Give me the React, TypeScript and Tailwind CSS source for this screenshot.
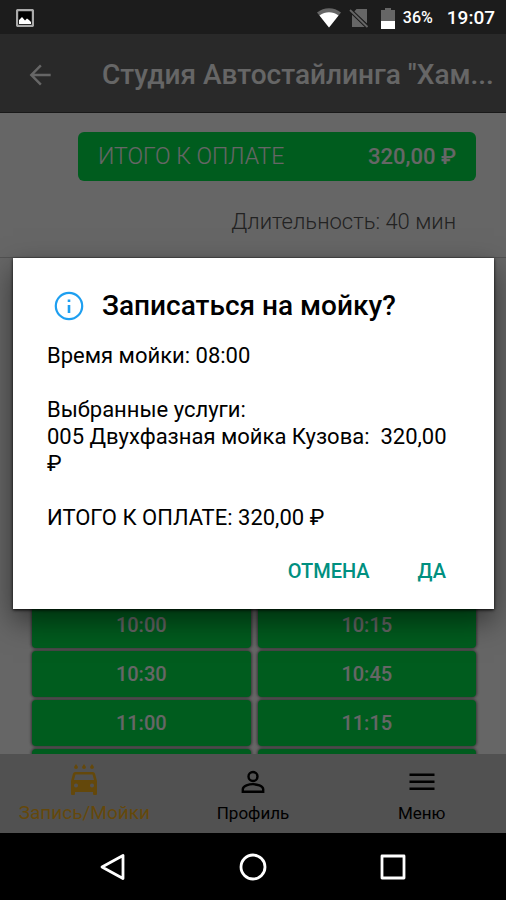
import React from "react";

const slots = ["10:00", "10:15", "10:30", "10:45", "11:00", "11:15"];
const nextSlots = ["11:30", "11:45"];

const slotClass =
  "h-[46px] rounded-[4px] bg-[#00e64d] text-[20px] leading-6 font-medium text-white shadow-[0_0_3px_1px_#888]";

function StatusBar() {
  return (
    <div className="flex h-[34px] shrink-0 items-center bg-[#1c1c1c] pt-0.5 pr-[11px] pl-4 text-white">
      <svg className="h-[18px] w-[18px]" viewBox="0 0 18 18" aria-hidden="true">
        <rect x="1" y="1" width="16" height="16" rx="1.5" fill="#000" stroke="#aaa" strokeWidth="2.4" />
        <path d="M3 15V11l3-3 3 3.5 2-2 2 1.500 2 2V15z" fill="#fff" />
      </svg>
      <div className="ml-auto flex items-center">
        <svg className="mr-2 h-5 w-6" viewBox="0 0 24 20" aria-hidden="true">
          <path d="M0 4.500C7-1.300 17-1.300 24 4.500L12 19.500z" fill="#666" />
          <path d="M2.500 7.500C8.500 3.200 15.500 3.200 21.500 7.500L12 19.500z" fill="#fff" />
        </svg>
        <svg className="mr-3 h-5 w-5" viewBox="0 0 20 20" aria-hidden="true">
          <path d="M7.500 1H18v14.500L4.800 4z" fill="#666" />
          <path d="M3 6.500L16.500 19H3z" fill="#666" />
          <path d="M1 2l17.500 17" stroke="#1c1c1c" strokeWidth="4" />
          <path d="M1 2l17.500 17" stroke="#666" strokeWidth="1.800" />
        </svg>
        <svg className="mr-2 h-[21px] w-[14px]" viewBox="0 0 14 21" aria-hidden="true">
          <path d="M4 0h6v2h4v12H0V2h4z" fill="#666" />
          <path d="M0 13h14v8H0z" fill="#fff" />
        </svg>
        <span className="mr-[14px] text-[16px] leading-5 font-medium">36%</span>
        <span className="text-[19px] leading-6 font-medium">19:07</span>
      </div>
    </div>
  );
}

function Header() {
  return (
    <header className="flex h-[79px] shrink-0 items-center border-b border-[#404040] bg-[#666] pt-1 pr-2 pl-6 text-white">
      <button type="button" aria-label="Назад" className="mr-[46px] shrink-0">
        <svg className="h-8 w-8" viewBox="0 0 24 24" fill="currentColor" aria-hidden="true">
          <path d="M20 11.100H7.700l5.600-5.600L12 4.200 4.200 12l7.800 7.800 1.300-1.300-5.600-5.600H20z" />
        </svg>
      </button>
      <h1 className="min-w-0 flex-1 truncate text-[28px] leading-8 font-medium">
        Студия Автостайлинга "Хам...
      </h1>
    </header>
  );
}

function Booking() {
  return (
    <main className="min-h-0 flex-1 overflow-hidden bg-white">
      <section className="h-[145px] border-b border-[#ccc] pt-[19px] pr-[30px] pl-[78px]">
        <button
          type="button"
          className="flex h-[49px] w-full items-center justify-between rounded-md bg-[#00e64d] px-5 leading-7 text-white"
        >
          <span className="text-[23px] font-light">ИТОГО К ОПЛАТЕ</span>
          <span className="text-[22px] font-medium">320,00 ₽</span>
        </button>
        <p className="mt-[27px] pr-5 text-right text-[22px] leading-7 font-light text-[#555]">
          Длительность: 40 мин
        </p>
      </section>
      <section className="grid grid-cols-2 gap-x-[7px] gap-y-[3px] pt-[344px] pr-[30px] pl-8">
        {slots.map((slot) => (
          <button key={slot} type="button" className={slotClass}>
            {slot}
          </button>
        ))}
        {nextSlots.map((slot) => (
          <button key={slot} type="button" aria-label={slot} className={slotClass} />
        ))}
      </section>
    </main>
  );
}

function TabBar() {
  const tab = "flex flex-1 flex-col items-center pt-[9px] leading-5";
  return (
    <nav className="flex h-[79px] shrink-0 bg-[#cbcbcb] text-black">
      <a href="#booking" className={`${tab} text-[19px] text-[#fbb51c]`}>
        <svg className="mb-1 h-9 w-9" viewBox="0 0 36 36" fill="currentColor" aria-hidden="true">
          <path d="M10 1l2 3a2 2 0 1 1-4 0zM18 1l2 3a2 2 0 1 1-4 0zM26 1l2 3a2 2 0 1 1-4 0z" />
          <path
            fillRule="evenodd"
            d="M9 9h18q1.500 0 2 1.500L31 18v13q0 1-1 1h-2q-1 0-1-1v-2H9v2q0 1-1 1H6q-1 0-1-1V18l2-7.500Q7.500 9 9 9zM9.500 11.500L8 17h20l-1.500-5.500zM10 20.500a2 2 0 1 0 0 4 2 2 0 0 0 0-4zM26 20.500a2 2 0 1 0 0 4 2 2 0 0 0 0-4z"
          />
        </svg>
        Запись/Мойки
      </a>
      <a href="#profile" className={`${tab} text-[17px]`}>
        <svg className="mb-1 h-9 w-9" viewBox="0 0 24 24" fill="none" stroke="currentColor" strokeWidth="1.600" aria-hidden="true">
          <circle cx="12" cy="9" r="3" />
          <path d="M5.200 19.200v-1.700c0-2.200 4.300-3.400 6.800-3.400s6.800 1.200 6.800 3.400v1.700z" />
        </svg>
        Профиль
      </a>
      <a href="#menu" className={`${tab} text-[17px]`}>
        <svg className="mb-1 h-9 w-9" viewBox="0 0 36 36" fill="currentColor" aria-hidden="true">
          <path d="M5.500 10.500h25V13h-25zM5.500 17.500h25V20h-25zM5.500 24.500h25V27h-25z" />
        </svg>
        Меню
      </a>
    </nav>
  );
}

function ConfirmDialog() {
  return (
    <div className="absolute inset-0 flex items-center bg-black/60 pr-3 pl-[13px]">
      <div
        role="dialog"
        aria-modal="true"
        aria-labelledby="dialog-title"
        className="w-full bg-white px-[34px] pt-8 pb-[14px] text-black shadow-[0_12px_28px_rgba(0,0,0,0.5),0_1px_3px_rgba(0,0,0,0.9)]"
      >
        <div className="flex items-center gap-[18px] pl-[7px]">
          <svg className="h-[30px] w-[30px]" viewBox="0 0 30 30" fill="none" stroke="#1e9ff0" aria-hidden="true">
            <circle cx="15" cy="15" r="13.200" strokeWidth="2.200" />
            <path d="M15 14v8M15 8.500v2.500" strokeWidth="2.600" />
          </svg>
          <h2 id="dialog-title" className="text-[28px] leading-8 font-medium">
            Записаться на мойку?
          </h2>
        </div>
        <div className="mt-5 text-[22px] leading-[27px] whitespace-pre-wrap">
          <p>Время мойки: 08:00</p>
          <p className="mt-[27px]">Выбранные услуги:</p>
          <p>{"005 Двухфазная мойка Кузова:  320,00 ₽"}</p>
          <p className="mt-[27px]">ИТОГО К ОПЛАТЕ: 320,00 ₽</p>
        </div>
        <div className="mt-4 flex justify-end gap-6 pr-0.5 text-[20px] leading-6 font-medium text-[#009080]">
          <button type="button" className="px-3 py-3">ОТМЕНА</button>
          <button type="button" className="px-3 py-3">ДА</button>
        </div>
      </div>
    </div>
  );
}

function SystemNav() {
  return (
    <div className="flex h-[67px] shrink-0 items-center justify-center gap-[112px] bg-black text-white">
      <button type="button" aria-label="Назад">
        <svg className="h-7 w-7" viewBox="0 0 28 28" fill="none" stroke="currentColor" strokeWidth="2.800" strokeLinejoin="round" aria-hidden="true">
          <path d="M24 2.500v23L3 14z" />
        </svg>
      </button>
      <button type="button" aria-label="Домой">
        <svg className="h-7 w-7" viewBox="0 0 28 28" fill="none" stroke="currentColor" strokeWidth="2.800" aria-hidden="true">
          <circle cx="14" cy="14" r="12" />
        </svg>
      </button>
      <button type="button" aria-label="Недавние">
        <svg className="h-7 w-7" viewBox="0 0 28 28" fill="none" stroke="currentColor" strokeWidth="2.800" strokeLinejoin="round" aria-hidden="true">
          <rect x="3" y="3" width="22" height="22" />
        </svg>
      </button>
    </div>
  );
}

export default function App() {
  return (
    <div className="flex h-screen flex-col overflow-hidden font-[Roboto,sans-serif]">
      <StatusBar />
      <div className="relative flex min-h-0 flex-1 flex-col">
        <Header />
        <Booking />
        <TabBar />
        <ConfirmDialog />
      </div>
      <SystemNav />
    </div>
  );
}
